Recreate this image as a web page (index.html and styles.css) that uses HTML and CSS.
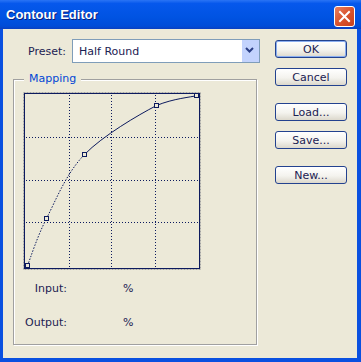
FILE: index.html
```html
<!DOCTYPE html>
<html lang="en">
<head>
  <meta charset="UTF-8" />
  <title>Contour Editor</title>
  <link rel="stylesheet" href="styles.css">
</head>
<body>
  <div class="window">
    <div class="titlebar">
      <span class="title">Contour Editor</span>
      <button class="close" type="button" aria-label="Close">
        <svg width="19" height="19" viewBox="0 0 19 19"><path d="M5 5 L14 14 M14 5 L5 14" stroke="#fff" stroke-width="2" stroke-linecap="square"/></svg>
      </button>
    </div>

    <div class="client">
      <div class="main">
        <div class="preset-row">
          <label class="preset-label">Preset:</label>
          <div class="combo">
            <span class="combo-text">Half Round</span>
            <span class="combo-btn">
              <svg width="17" height="22" viewBox="0 0 17 22"><polyline points="4,8 7.5,11.5 11,8" fill="none" stroke="#2b3f86" stroke-width="2"/></svg>
            </span>
          </div>
        </div>

        <div class="group">
          <span class="legend">Mapping</span>
          <svg class="graph" width="178" height="178" viewBox="0 0 178 178">
            <rect x="0.5" y="0.5" width="177" height="177" fill="none" stroke="#a3a3a3" stroke-dasharray="2 1"/>
            <rect x="1.5" y="1.5" width="175" height="175" fill="none" stroke="#0c1a5e"/>
            <g stroke="#0c1a5e" stroke-dasharray="1 2">
              <line x1="46.5" y1="3" x2="46.5" y2="176"/>
              <line x1="88.5" y1="3" x2="88.5" y2="176"/>
              <line x1="132.5" y1="3" x2="132.5" y2="176"/>
              <line x1="3" y1="45.5" x2="176" y2="45.5"/>
              <line x1="3" y1="88.5" x2="176" y2="88.5"/>
              <line x1="3" y1="130.5" x2="176" y2="130.5"/>
            </g>
            <!-- steep part of the curve renders as dots, the flat part as a line -->
            <path d="M4.5 173.5 C7.7 165.7 14 145 23.5 126.5 C33 108 43.2 81.3 61.5 62.5" fill="none" stroke="#0c1a5e" stroke-dasharray="1.5 1.5"/>
            <path d="M61.5 62.5 C79.8 43.7 114.7 23.3 133.5 13.5 C150.5 6.5 167.7 5.2 174.5 3.5" fill="none" stroke="#0c1a5e"/>
            <g fill="#ece9d8" stroke="#0c1a5e">
              <rect x="2.5" y="171.5" width="4" height="4"/>
              <rect x="21.5" y="124.5" width="4" height="4"/>
              <rect x="59.5" y="60.5" width="4" height="4"/>
              <rect x="131.5" y="11.5" width="4" height="4"/>
              <rect x="171.5" y="1.5" width="4" height="4"/>
            </g>
          </svg>
          <div class="readout"><span class="readout-label">Input:</span><span class="readout-value">%</span></div>
          <div class="readout"><span class="readout-label">Output:</span><span class="readout-value">%</span></div>
        </div>
      </div>

      <div class="buttons">
        <button type="button" class="btn default">OK</button>
        <button type="button" class="btn">Cancel</button>
        <button type="button" class="btn spaced">Load...</button>
        <button type="button" class="btn">Save...</button>
        <button type="button" class="btn spaced">New...</button>
      </div>
    </div>
  </div>
</body>
</html>
```

FILE: styles.css
```css
body {
  margin: 0;
  background: #ece9d8;
}
.window {
  width: 361px;
  height: 362px;
  display: flex;
  flex-direction: column;
  font-family: "DejaVu Sans", sans-serif;
  font-size: 11px;
  color: #1b2152;
}
.titlebar {
  height: 29px;
  flex: none;
  display: flex;
  justify-content: space-between;
  align-items: flex-start;
  padding: 0 6px 0 6px;
  background: linear-gradient(#2a74f5, #0658ec 12%, #0053e2 60%, #004cd8 90%, #0a3fc0);
  box-sizing: border-box;
}
.title {
  margin-top: 7px;
  line-height: 16px;
  font-family: "Liberation Sans", Arial, sans-serif;
  font-weight: bold;
  font-size: 13px;
  color: #fff;
  text-shadow: 1px 1px 0 #0a1e78;
}
.close {
  margin-top: 6px;
  width: 21px;
  height: 21px;
  padding: 0;
  border: 1px solid #fff;
  border-radius: 3px;
  background: linear-gradient(135deg, #ea8060, #d9542e 50%, #c8401c);
  display: flex;
  align-items: center;
  justify-content: center;
}
.client {
  flex: 1;
  display: flex;
  border-left: 3px solid #0a50e0;
  border-right: 4px solid #0a50e0;
  border-bottom: 4px solid #0a50e0;
  background: #ece9d8;
}
.main {
  padding-left: 10px;
  width: 247px;
}
.preset-row {
  display: flex;
  align-items: center;
  margin-top: 10px;
  padding-left: 15px;
}
.preset-label {
  width: 44px;
}
.combo {
  width: 188px;
  height: 24px;
  box-sizing: border-box;
  border: 1px solid #7f9db9;
  background: #fff;
  display: flex;
  align-items: center;
}
.combo-text {
  flex: 1;
  padding-left: 6px;
}
.combo-btn {
  width: 17px;
  height: 22px;
  background: #c3d3fd;
  display: flex;
}
.group {
  position: relative;
  margin-top: 16px;
  width: 244px;
  height: 266px;
  box-sizing: border-box;
  border: 1px solid #a0a0a0;
  box-shadow: inset 1px 1px #fff, 1px 1px #fff;
}
.legend {
  position: absolute;
  top: -8px;
  left: 10px;
  padding: 0 5px;
  background: #ece9d8;
  color: #0046d5;
  line-height: 14px;
}
.graph {
  display: block;
  margin: 12px 0 0 9px;
}
.readout {
  display: flex;
  margin-top: 12px;
  line-height: 14px;
}
.readout + .readout {
  margin-top: 20px;
}
.readout-label {
  width: 53px;
  text-align: right;
}
.readout-value {
  margin-left: 56px;
}
.buttons {
  margin-left: 15px;
  padding-top: 11px;
  display: flex;
  flex-direction: column;
}
.btn {
  width: 72px;
  height: 18px;
  padding: 0;
  margin-top: 10px;
  font-family: "DejaVu Sans", sans-serif;
  font-size: 11px;
  color: #1b2152;
  border: 1px solid #23428f;
  border-radius: 3px;
  background: linear-gradient(#ffffff, #f4f3ee 55%, #dcd8cc);
}
.btn:first-child {
  margin-top: 0;
}
.btn.default {
  box-shadow: inset 0 0 0 1px #8aaef0;
}
.btn.spaced {
  margin-top: 17px;
}
```
